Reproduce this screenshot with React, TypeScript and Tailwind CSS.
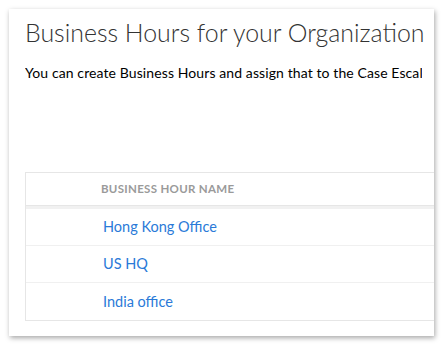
const rows = ["Hong Kong Office", "US HQ", "India office"];

export default function App() {
  return (
    <div className="h-[347px] w-[443px] overflow-hidden bg-white pl-[9px] pt-[9px]" style={{ fontFamily: "Lato, 'Open Sans', sans-serif" }}>
      <div className="h-[327px] w-[425px] overflow-hidden bg-white shadow-[1px_2px_5px_rgba(0,0,0,0.35)]">
        <div className="pl-[16px] pt-[7px]">
          <h1 className="whitespace-nowrap text-[24.9px] font-light leading-[32px] text-[#333]">Business Hours for your Organization</h1>
          <p className="mt-[15px] w-[397px] overflow-hidden whitespace-nowrap text-[14px] leading-[20px] tracking-[0.1px] text-black">
            You can create Business Hours and assign that to the Case Escalation rules.
          </p>
        </div>
        <div className="ml-[16px] mt-[89px] w-[440px] border border-[#e6e6e6]">
          <div className="flex h-[33px] items-center border-b border-[#e6e6e6] pl-[75px] text-[11.5px] font-bold tracking-[0.3px] text-[#9a9a9a]">
            BUSINESS HOUR NAME
          </div>
          <div className="h-[3px] bg-[#f1f1f1]" />
          {rows.map((name, i) => (
            <div key={name} className={"flex h-[37px] items-center pl-[77px] text-[14.5px] text-[#2a7ad8]" + (i < rows.length - 1 ? " border-b border-[#f0f0f0]" : "")}>
              {name}
            </div>
          ))}
        </div>
      </div>
    </div>
  );
}
